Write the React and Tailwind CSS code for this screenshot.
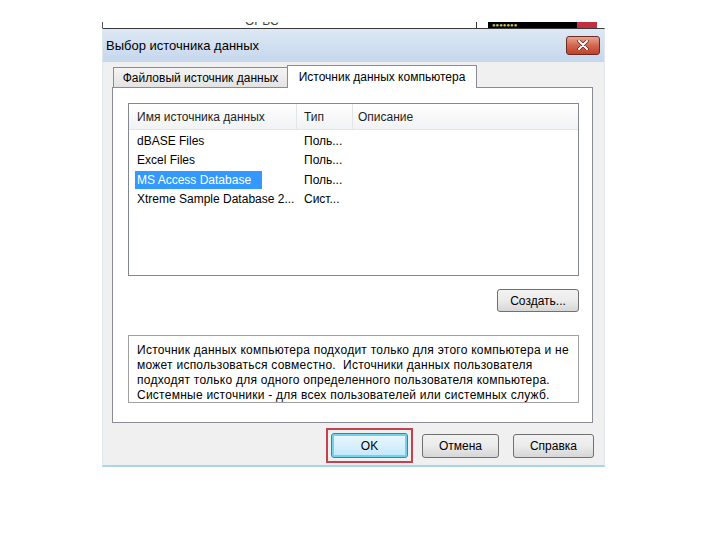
import { useState } from "react";

const rows = [
  { name: "dBASE Files", type: "Поль..." },
  { name: "Excel Files", type: "Поль..." },
  { name: "MS Access Database", type: "Поль..." },
  { name: "Xtreme Sample Database 2...", type: "Сист..." },
];

function WinButton({ children, className = "" }) {
  return (
    <div
      className={
        "flex items-center justify-center rounded-[3px] border border-[#707070] bg-gradient-to-b from-[#f2f2f2] via-[#ebebeb] to-[#d6d6d6] text-[12px] text-black " +
        className
      }
    >
      {children}
    </div>
  );
}

export default function App() {
  const [selected, setSelected] = useState(2);

  return (
    <div
      className="w-[720px] h-[540px] bg-white overflow-hidden"
      style={{ fontFamily: "'Liberation Sans', Arial, sans-serif" }}
    >
      {/* clipped strip of the window behind */}
      <div className="ml-[102px] mt-[22px] h-[6px] w-[503px] flex overflow-hidden">
        <div className="w-px h-full bg-[#555]" />
        <div className="w-[142px]" />
        <div className="-mt-[7px] text-[12px] leading-[12px] text-[#444]">ОРВС</div>
        <div className="flex-1" />
        <div className="w-px h-full bg-[#333]" />
        <div className="w-[11px]" />
        <div className="w-[89px] h-full bg-black text-[6px] leading-[6px] text-[#c8c060] pl-1">
          ●●●●●●●
        </div>
        <div className="w-[20px] h-full bg-[#c03040]" />
        <div className="w-[8px]" />
      </div>

      {/* dialog window */}
      <div className="ml-[102px] w-[503px] h-[439px] flex flex-col border-t border-[#3a3a3a] border-x border-x-[#dfe6ee] border-b-2 border-b-[#a9d6e6]">
        {/* title bar */}
        <div className="h-[33px] shrink-0 flex items-center pl-[3px] pr-[4px] bg-gradient-to-b from-[#dde8f5] to-[#c6d7ec]">
          <span className="text-[13px] text-black">Выбор источника данных</span>
          <div className="flex-1" />
          <div className="mt-[-1px] w-[34px] h-[19px] rounded-[3px] border border-[#6b2a22] bg-gradient-to-b from-[#e8a493] via-[#d2664e] to-[#c0412a] flex items-center justify-center">
            <svg width="12" height="10" viewBox="0 0 12 10">
              <path d="M2 1 L10 9 M10 1 L2 9" stroke="#5a2018" strokeWidth="3.4" strokeLinecap="round" />
              <path d="M2 1 L10 9 M10 1 L2 9" stroke="#ffffff" strokeWidth="2" strokeLinecap="round" />
            </svg>
          </div>
        </div>

        {/* body */}
        <div className="flex-1 flex flex-col bg-[#f0f0f0] pl-[9px] pr-[11px]">
          {/* tabs */}
          <div className="h-[22px] mt-[3px] flex items-end pl-px">
            <div className="h-[21px] w-[175px] -mb-px flex items-center justify-center border border-[#898c95] border-b-0 bg-gradient-to-b from-[#f4f4f4] to-[#e2e2e2] text-[12px] text-black">
              Файловый источник данных
            </div>
            <div className="h-[23px] w-[190px] -mb-px -ml-px flex items-center justify-center border border-[#898c95] border-b-0 bg-white text-[12px] text-black relative z-10">
              Источник данных компьютера
            </div>
          </div>

          {/* tab panel */}
          <div className="h-[336px] border border-[#898c95] bg-white pt-[15px] pl-[15px] pr-[13px] flex flex-col">
            {/* list view */}
            <div className="h-[173px] border border-[#828790] bg-white flex flex-col">
              <div className="h-[26px] flex bg-gradient-to-b from-white to-[#f1f2f4] border-b border-[#e5e5e5] text-[12px] text-[#1e1e1e]">
                <div className="w-[168px] pl-[8px] flex items-center border-r border-[#e3e5e8]">
                  Имя источника данных
                </div>
                <div className="w-[56px] pl-[7px] flex items-center border-r border-[#e3e5e8]">
                  Тип
                </div>
                <div className="flex-1 pl-[5px] flex items-center">Описание</div>
              </div>
              <div className="pt-[1px]">
                {rows.map((r, i) => (
                  <div
                    key={r.name}
                    className="h-[19.5px] flex items-center text-[12px] text-black cursor-default"
                    onClick={() => setSelected(i)}
                  >
                    <div className="w-[168px] pl-[6px] flex items-center">
                      <span
                        className={
                          i === selected
                            ? "bg-[#3399ff] text-white px-[2px] h-[18px] w-[127px] flex items-center"
                            : "px-[2px]"
                        }
                      >
                        {r.name}
                      </span>
                    </div>
                    <div className="pl-[7px]">{r.type}</div>
                  </div>
                ))}
              </div>
            </div>

            <div className="flex justify-end mt-[13px]">
              <WinButton className="w-[82px] h-[23px]">Создать...</WinButton>
            </div>

            {/* description */}
            <div className="mt-[23px] h-[68px] border border-[#a0a0a0] bg-white pl-[8px] pt-[7px] text-[12px] leading-[15px] tracking-[0.25px] text-black">
              Источник данных компьютера подходит только для этого компьютера и не
              <br />
              может использоваться совместно.&nbsp; Источники данных пользователя
              <br />
              подходят только для одного определенного пользователя компьютера.
              <br />
              Системные источники - для всех пользователей или системных служб.
            </div>
          </div>

          {/* bottom buttons */}
          <div className="flex items-center justify-end mt-[5px]">
            <div className="border-2 border-[#c4424e] p-[3px]">
              <div className="w-[77px] h-[25px] rounded-[3px] border border-[#3c7fb1] shadow-[inset_0_0_0_2px_#6fd3ee] bg-gradient-to-b from-[#eaf6fd] via-[#d9f0fc] to-[#bee6fd] flex items-center justify-center text-[12px] text-black">
                OK
              </div>
            </div>
            <WinButton className="ml-[9px] w-[77px] h-[24px]">Отмена</WinButton>
            <WinButton className="ml-[14px] w-[81px] h-[24px] mr-[-1px]">Справка</WinButton>
          </div>
        </div>
      </div>
    </div>
  );
}
